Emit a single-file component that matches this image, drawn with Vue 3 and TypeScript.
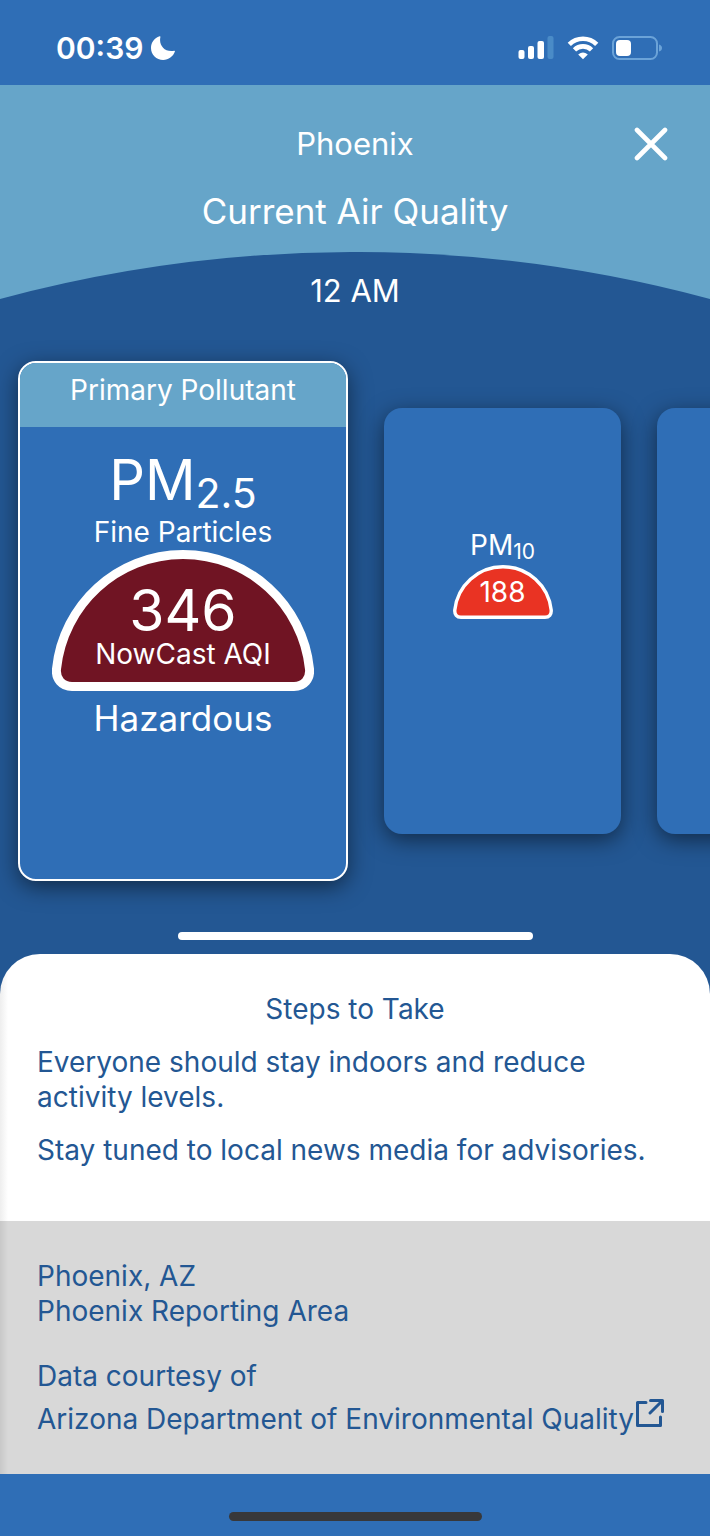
<script setup lang="ts">
interface Pollutant {
  name: string
  sub: string
  aqi: string
}

const primary: Pollutant = { name: 'PM', sub: '2.5', aqi: '346' }
const secondary: Pollutant = { name: 'PM', sub: '10', aqi: '188' }

const steps: string[] = [
  'Everyone should stay indoors and reduce activity levels.',
  'Stay tuned to local news media for advisories.',
]
</script>

<template>
  <div class="screen">
    <div class="status">
      <div class="clock">
        <span>00:39</span>
        <svg class="moon" viewBox="0 0 24 24" aria-hidden="true">
          <path d="M8.600 0.300C9.200 0.100 9.600 0.500 9.400 1.100C7.600 8.800 13.400 16.600 23.200 14.700C23.800 14.600 24.100 15 23.900 15.600C22.200 20.600 17.600 24 12.200 24C5.400 24 0 18.700 0 12C0 6.500 3.400 2 8.600 0.300Z" fill="#fff" />
        </svg>
      </div>
      <div class="indicators">
        <svg class="signal" viewBox="0 0 36 24" aria-hidden="true">
          <rect x="0.500" y="14" width="6" height="9" rx="2" fill="#fff" />
          <rect x="10" y="10" width="6" height="13" rx="2" fill="#fff" />
          <rect x="19.500" y="5" width="6.500" height="18" rx="2" fill="#fff" />
          <rect x="29.500" y="0" width="6" height="23" rx="2" fill="#4a8bc7" />
        </svg>
        <svg class="wifi" viewBox="0 0 32 24" aria-hidden="true">
          <g fill="none" stroke="#fff" stroke-width="4.600">
            <path d="M2.300 8.300A19.500 19.500 0 0 1 29.700 8.300" />
            <path d="M7.500 13.900A12 12 0 0 1 24.500 13.900" />
          </g>
          <path d="M16 23.300L11.200 18.500Q16 14.300 20.800 18.500Z" fill="#fff" />
        </svg>
        <svg class="battery" viewBox="0 0 50 24" aria-hidden="true">
          <rect x="1" y="1" width="44" height="22" rx="6.500" fill="none" stroke="#6ba3d8" stroke-width="2" />
          <rect x="4" y="4" width="15" height="16" rx="4" fill="#fff" />
          <path d="M47 8.500Q50 9.500 50 12T47 15.500Z" fill="#6ba3d8" />
        </svg>
      </div>
    </div>

    <header class="header">
      <div class="place">Phoenix</div>
      <h1 class="title">Current Air Quality</h1>
      <button class="close" type="button" aria-label="Close">
        <svg viewBox="0 0 34 34" aria-hidden="true">
          <path d="M3 3L31 31M31 3L3 31" fill="none" stroke="#fff" stroke-width="4.600" stroke-linecap="round" />
        </svg>
      </button>
    </header>

    <main class="stage">
      <svg class="arc" viewBox="0 0 710 48" preserveAspectRatio="none" aria-hidden="true">
        <rect width="710" height="48" fill="#66a5c9" />
        <path d="M0 47A1364 1364 0 0 1 710 47V48H0Z" fill="#235793" />
      </svg>
      <div class="time">12 AM</div>

      <div class="cards">
        <section class="card card-primary">
          <div class="card-head">Primary Pollutant</div>
          <div class="pm">{{ primary.name }}<span class="pm-sub">{{ primary.sub }}</span></div>
          <div class="kind">Fine Particles</div>
          <div class="gauge gauge-large">
            <svg viewBox="0 0 262 141" aria-hidden="true">
              <path d="M131 4.500C197 4.500 251 55 257.500 119C258.500 129 252 136.500 242 136.500H20C10 136.500 3.500 129 4.500 119C11 55 65 4.500 131 4.500Z" fill="#701423" stroke="#fff" stroke-width="9" />
            </svg>
            <div class="gauge-text">
              <div class="aqi">{{ primary.aqi }}</div>
              <div class="aqi-label">NowCast AQI</div>
            </div>
          </div>
          <div class="level">Hazardous</div>
        </section>

        <section class="card card-small">
          <div class="pm">{{ secondary.name }}<span class="pm-sub">{{ secondary.sub }}</span></div>
          <div class="gauge gauge-small">
            <svg viewBox="0 0 100 54" aria-hidden="true">
              <path d="M50 1.700C75 1.700 95.600 20.500 98.200 45C98.600 49.500 96.200 52.300 92 52.300H8C3.800 52.300 1.400 49.500 1.800 45C4.400 20.500 25 1.700 50 1.700Z" fill="#e93323" stroke="#fff" stroke-width="3.400" />
            </svg>
            <div class="gauge-text">{{ secondary.aqi }}</div>
          </div>
        </section>

        <section class="card card-small"></section>
      </div>

      <div class="grabber"></div>
    </main>

    <div class="sheet">
      <section class="steps">
        <h2>Steps to Take</h2>
        <p v-for="step in steps" :key="step">{{ step }}</p>
      </section>
      <footer class="source">
        <div>Phoenix, AZ</div>
        <div>Phoenix Reporting Area</div>
        <div class="courtesy">Data courtesy of</div>
        <a href="#" class="agency">
          <span>Arizona Department of Environmental Quality</span>
          <svg class="external" viewBox="0 0 30 30" aria-hidden="true">
            <g fill="none" stroke="#235793" stroke-width="3" stroke-linejoin="round" stroke-linecap="round">
              <path d="M11 4.500H2.500V27.500H25.500V19" />
              <path d="M15.500 2.500H27.500V13.500M27.300 2.700L15 15" />
            </g>
          </svg>
        </a>
      </footer>
    </div>

    <div class="home"><span></span></div>
  </div>
</template>

<style>
body {
  margin: 0;
  background: #2f6eb6;
}
</style>

<style scoped>
.screen {
  min-height: 100vh;
  display: flex;
  flex-direction: column;
  overflow: hidden;
  background: #2f6eb6;
  color: #fff;
  font-family: Inter, "Liberation Sans", sans-serif;
  font-size: 28px;
  line-height: 36px;
}
.status {
  height: 85px;
  padding: 10px 48px 0 56px;
  box-sizing: border-box;
  display: flex;
  justify-content: space-between;
  align-items: center;
}
.clock {
  display: flex;
  align-items: center;
  gap: 8px;
  font-size: 30px;
  font-weight: 600;
}
.moon {
  width: 24px;
  height: 24px;
}
.indicators {
  display: flex;
  align-items: center;
  gap: 13px;
}
.signal { width: 36px; height: 24px; }
.wifi { width: 32px; height: 24px; }
.battery { width: 50px; height: 24px; }
.header {
  position: relative;
  padding: 37px 0 17px;
  background: #66a5c9;
  text-align: center;
}
.place {
  font-size: 31px;
  line-height: 44px;
}
.title {
  margin: 21px 0 0;
  font-size: 35px;
  font-weight: 400;
  line-height: 48px;
}
.close {
  position: absolute;
  top: 36px;
  right: 36px;
  width: 46px;
  height: 46px;
  padding: 6px;
  border: 0;
  background: none;
}
.close svg {
  display: block;
  width: 34px;
  height: 34px;
}
.stage {
  position: relative;
  padding-top: 21px;
  background: #235793;
}
.arc {
  position: absolute;
  top: 0;
  left: 0;
  width: 100%;
  height: 48px;
}
.time {
  position: relative;
  text-align: center;
  font-size: 31px;
}
.cards {
  display: flex;
  align-items: center;
  gap: 36px;
  padding: 52px 0 0 18px;
}
.card {
  flex: none;
  box-sizing: border-box;
  border-radius: 18px;
  background: #2f6eb6;
  box-shadow: 0 6px 22px rgba(0, 0, 0, 0.5);
  text-align: center;
}
.card-primary {
  width: 330px;
  height: 520px;
  border: 2px solid #fff;
  overflow: hidden;
}
.card-head {
  padding: 9px 0 19px;
  background: #66a5c9;
}
.card-primary .pm {
  padding-top: 22px;
  font-size: 56px;
  line-height: 62px;
}
.pm-sub {
  position: relative;
}
.card-primary .pm-sub {
  top: 8px;
  font-size: 41px;
}
.kind {
  margin-top: -2px;
}
.gauge {
  position: relative;
  margin: 0 auto;
}
.gauge svg {
  display: block;
  width: 100%;
}
.gauge-text {
  position: absolute;
  left: 0;
  right: 0;
}
.gauge-large {
  width: 262px;
}
.gauge-large .gauge-text {
  top: 32px;
}
.aqi {
  font-size: 57px;
  line-height: 58px;
}
.aqi-label {
  line-height: 28px;
}
.level {
  padding-top: 4px;
  font-size: 35px;
  line-height: 46px;
}
.card-small {
  width: 237px;
  height: 426px;
  padding-top: 119px;
}
.card-small .pm-sub {
  top: 4px;
  font-size: 21px;
}
.gauge-small {
  width: 100px;
  margin-top: -1px;
}
.gauge-small .gauge-text {
  top: 9px;
}
.grabber {
  width: 50%;
  height: 8px;
  margin: 51px auto 14px;
  border-radius: 4px;
  background: #fff;
}
.sheet {
  color: #235793;
  background: linear-gradient(#235793 0 50px, transparent 50px);
}
.steps {
  padding: 37px 37px 53px;
  border-radius: 40px 40px 0 0;
  background: linear-gradient(90deg, #eeeeee, #ffffff 8px);
}
.steps h2 {
  margin: 0;
  font-size: 28px;
  font-weight: 400;
  text-align: center;
}
.steps p {
  margin: 18px 0 0;
  line-height: 35px;
}
.source {
  padding: 38px 37px 34px;
  background: linear-gradient(90deg, #c8c8c8, #d8d8d8 8px);
  line-height: 35px;
}
.courtesy {
  margin-top: 30px;
}
.agency {
  display: flex;
  align-items: center;
  gap: 1px;
  margin-top: 4px;
  line-height: 40px;
  color: inherit;
  text-decoration: none;
}
.external {
  width: 30px;
  height: 30px;
  margin-bottom: 12px;
}
.home {
  flex: 1;
  display: flex;
  justify-content: center;
  align-items: flex-end;
  padding-bottom: 15px;
}
.home span {
  width: 253px;
  height: 9px;
  border-radius: 5px;
  background: #38383a;
}
</style>
